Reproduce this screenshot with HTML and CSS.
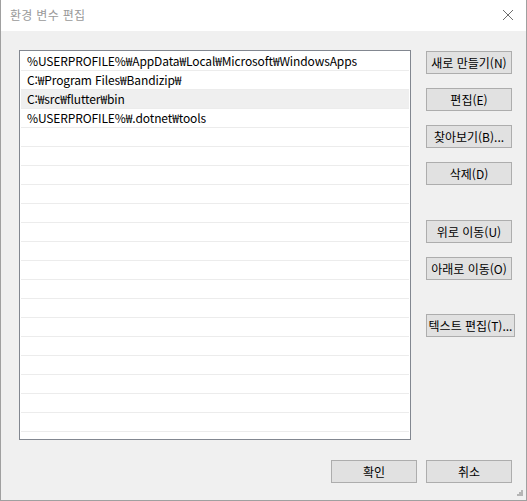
FILE: index.html
```html
<!DOCTYPE html>
<html lang="ko">
<head>
<meta charset="UTF-8">
<meta name="viewport" content="width=device-width, initial-scale=1.0">
<title>환경 변수 편집</title>
<link rel="stylesheet" href="styles.css">
</head>
<body>
<div class="window">
    <div class="title-bar">
        <span class="title">환경 변수 편집</span>
        <svg class="close" width="12" height="12" viewBox="0 0 12 12">
            <path d="M1 1 L11 11 M11 1 L1 11" stroke="#6d6d6d" stroke-width="1" fill="none"/>
        </svg>
    </div>

    <div class="content">
        <div class="main">
            <ul class="path-list" id="pathList"></ul>

            <div class="side-buttons">
                <div class="button-group">
                    <button>새로 만들기(N)</button>
                    <button>편집(E)</button>
                    <button>찾아보기(B)...</button>
                    <button>삭제(D)</button>
                </div>
                <div class="button-group">
                    <button>위로 이동(U)</button>
                    <button>아래로 이동(O)</button>
                </div>
                <div class="button-group">
                    <button class="wide">텍스트 편집(T)...</button>
                </div>
            </div>
        </div>

        <div class="footer">
            <button>확인</button>
            <button>취소</button>
        </div>
    </div>

    <svg class="grip" width="7" height="7" viewBox="0 0 7 7">
        <rect x="5" y="0" width="2" height="2" fill="#b5b5b5"/>
        <rect x="3" y="2" width="2" height="2" fill="#b5b5b5"/>
        <rect x="5" y="2" width="2" height="2" fill="#b5b5b5"/>
        <rect x="1" y="4" width="2" height="2" fill="#b5b5b5"/>
        <rect x="3" y="4" width="2" height="2" fill="#b5b5b5"/>
        <rect x="5" y="4" width="2" height="2" fill="#b5b5b5"/>
    </svg>
</div>

<script>
    var paths = [
        "%USERPROFILE%₩AppData₩Local₩Microsoft₩WindowsApps",
        "C:₩Program Files₩Bandizip₩",
        "C:₩src₩flutter₩bin",
        "%USERPROFILE%₩.dotnet₩tools"
    ];
    var selected = 2;
    var totalRows = 20;

    var list = document.getElementById("pathList");
    for (var i = 0; i < totalRows; i++) {
        var item = document.createElement("li");
        item.textContent = paths[i] || "";
        if (i === selected) {
            item.className = "selected";
        }
        list.appendChild(item);
    }
</script>
</body>
</html>
```

FILE: styles.css
```css
body {
    margin: 0;
    font-family: "Noto Sans CJK KR", "Noto Sans", sans-serif;
    font-size: 12px;
    color: #000;
}
.window {
    position: relative;
    width: 527px;
    height: 501px;
    box-sizing: border-box;
    border: 1px solid #a0a0a0;
    border-top: none;
    background-color: #f0f0f0;
    display: flex;
    flex-direction: column;
}
.title-bar {
    height: 31px;
    background-color: #fff;
    display: flex;
    align-items: center;
    justify-content: space-between;
    padding: 0 12px 2px 9px;
    box-sizing: border-box;
}
.title {
    color: #9a9a9a;
    font-size: 12px;
    line-height: 16px;
    letter-spacing: 0.3px;
}
.content {
    padding: 19px 14px 0 18px;
}
.main {
    display: flex;
    gap: 15px;
}
.path-list {
    flex-shrink: 0;
    list-style-type: none;
    margin: 0;
    padding: 1px 0 0 0;
    width: 392px;
    height: 390px;
    box-sizing: border-box;
    border: 1px solid #828790;
    background-color: #fff;
    overflow: hidden;
}
.path-list li {
    height: 18px;
    line-height: 18px;
    margin: 0 1px;
    padding-left: 6px;
    border-bottom: 1px solid #ececec;
    white-space: nowrap;
    letter-spacing: -0.12px;
}
.path-list li.selected {
    background-color: #efefef;
}
.side-buttons {
    flex-shrink: 0;
    width: 86px;
    margin-top: 1px;
    display: flex;
    flex-direction: column;
}
.button-group {
    display: flex;
    flex-direction: column;
    gap: 14px;
}
.button-group + .button-group {
    margin-top: 35px;
}
.button-group:last-child {
    margin-top: 34px;
}
button {
    flex-shrink: 0;
    width: 86px;
    height: 23px;
    padding: 0;
    background-color: #e1e1e1;
    border: 1px solid #adadad;
    font-family: inherit;
    font-size: 12px;
    line-height: 16px;
    color: #000;
    white-space: nowrap;
}
button.wide {
    width: 89px;
}
.footer {
    margin-top: 20px;
    display: flex;
    justify-content: flex-end;
    gap: 9px;
}
.grip {
    position: absolute;
    right: 3px;
    bottom: 3px;
}
```
